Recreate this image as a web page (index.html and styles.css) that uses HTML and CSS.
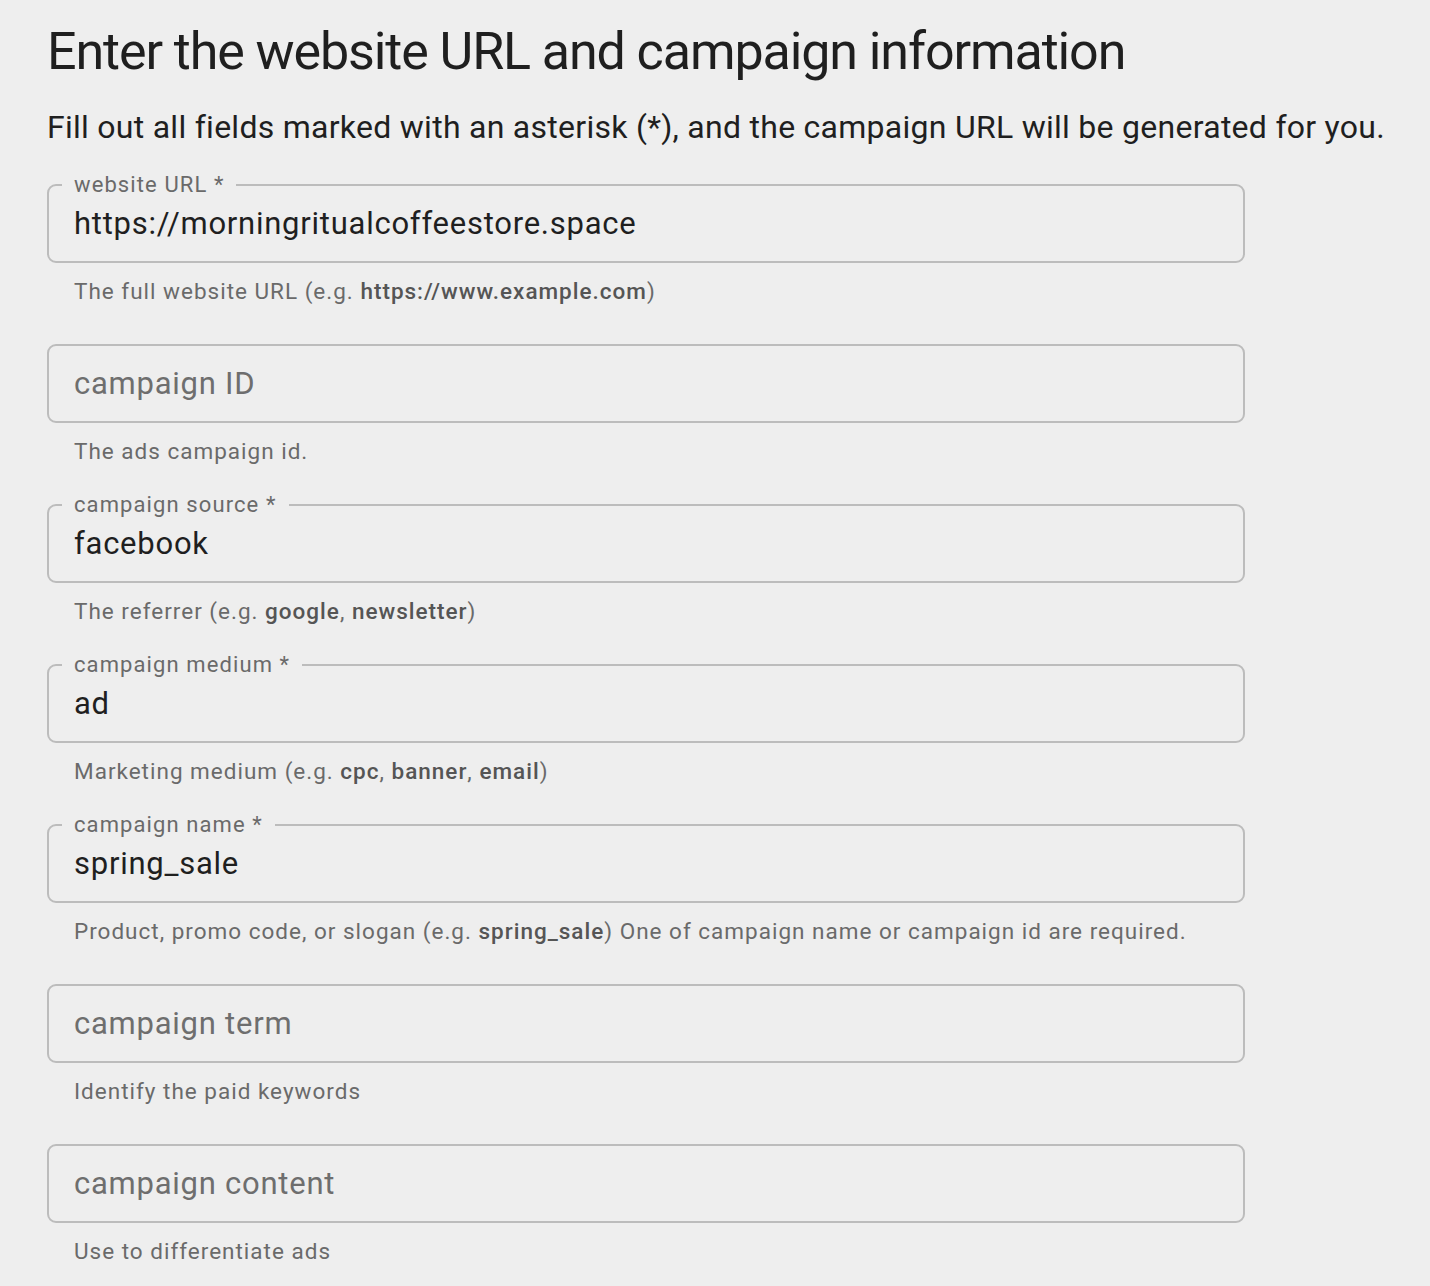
FILE: index.html
```html
<!DOCTYPE html>
<html lang="en">
<head>
<meta charset="utf-8">
<title>Campaign URL Builder</title>
<link rel="stylesheet" href="styles.css">
</head>
<body>
<main class="page">
  <h1 class="title">Enter the website URL and campaign information</h1>
  <p class="subtitle">Fill out all fields marked with an asterisk (*), and the campaign URL will be generated for you.</p>
  <form class="form">
    <div class="field">
      <fieldset class="box"><legend class="label">website URL *</legend><input class="input" type="text" value="https://morningritualcoffeestore.space"></fieldset>
      <p class="helper">The full website URL (e.g. <b>https://www.example.com</b>)</p>
    </div>
    <div class="field">
      <fieldset class="box"><input class="input" type="text" placeholder="campaign ID"></fieldset>
      <p class="helper">The ads campaign id.</p>
    </div>
    <div class="field">
      <fieldset class="box"><legend class="label">campaign source *</legend><input class="input" type="text" value="facebook"></fieldset>
      <p class="helper">The referrer (e.g. <b>google</b>, <b>newsletter</b>)</p>
    </div>
    <div class="field">
      <fieldset class="box"><legend class="label">campaign medium *</legend><input class="input" type="text" value="ad"></fieldset>
      <p class="helper">Marketing medium (e.g. <b>cpc</b>, <b>banner</b>, <b>email</b>)</p>
    </div>
    <div class="field">
      <fieldset class="box"><legend class="label">campaign name *</legend><input class="input" type="text" value="spring_sale"></fieldset>
      <p class="helper">Product, promo code, or slogan (e.g. <b>spring_sale</b>) One of campaign name or campaign id are required.</p>
    </div>
    <div class="field">
      <fieldset class="box"><input class="input" type="text" placeholder="campaign term"></fieldset>
      <p class="helper">Identify the paid keywords</p>
    </div>
    <div class="field">
      <fieldset class="box"><input class="input" type="text" placeholder="campaign content"></fieldset>
      <p class="helper">Use to differentiate ads</p>
    </div>
  </form>
</main>
</body>
</html>
```
FILE: styles.css
```css
html, body {
  margin: 0;
  padding: 0;
  background: #eeeeee;
}

body {
  font-family: Roboto, "Liberation Sans", Arial, sans-serif;
  color: #1f1f1f;
}

.page {
  padding: 22px 0 0 47px;
}

.title {
  margin: 0;
  font-size: 52px;
  line-height: 60px;
  font-weight: 400;
  letter-spacing: -1.1px;
  color: #1f1f1f;
}

.subtitle {
  margin: 25px 0 0;
  font-size: 32px;
  line-height: 40px;
  font-weight: 400;
  letter-spacing: 0.27px;
  color: #1f1f1f;
}

.form {
  margin-top: 37px;
  display: flex;
  flex-direction: column;
  gap: 36px;
}

.field {
  width: 1198px;
}

.box {
  box-sizing: border-box;
  height: 79px;
  margin: 0;
  padding: 0 25px;
  border: 2px solid #bcbcbc;
  border-radius: 9px;
  min-width: 0;
}

.label {
  margin-left: -12px;
  padding: 0 12px;
  font-size: 22px;
  line-height: 0;
  height: 0;
  color: #6a6a6a;
  letter-spacing: 1.1px;
}

.input {
  display: block;
  box-sizing: border-box;
  width: 100%;
  height: 75px;
  margin: 0;
  padding: 0;
  border: 0;
  outline: none;
  background: transparent;
  font-family: Roboto, "Liberation Sans", Arial, sans-serif;
  font-size: 31px;
  letter-spacing: 0.75px;
  color: #1f1f1f;
}

.input::placeholder {
  color: #6e6e6e;
  opacity: 1;
}

.helper {
  margin: 12px 0 0;
  padding-left: 27px;
  font-size: 22.5px;
  line-height: 33px;
  letter-spacing: 1px;
  color: #6a6a6a;
}

.helper b {
  font-weight: 500;
  color: #555555;
}
```
